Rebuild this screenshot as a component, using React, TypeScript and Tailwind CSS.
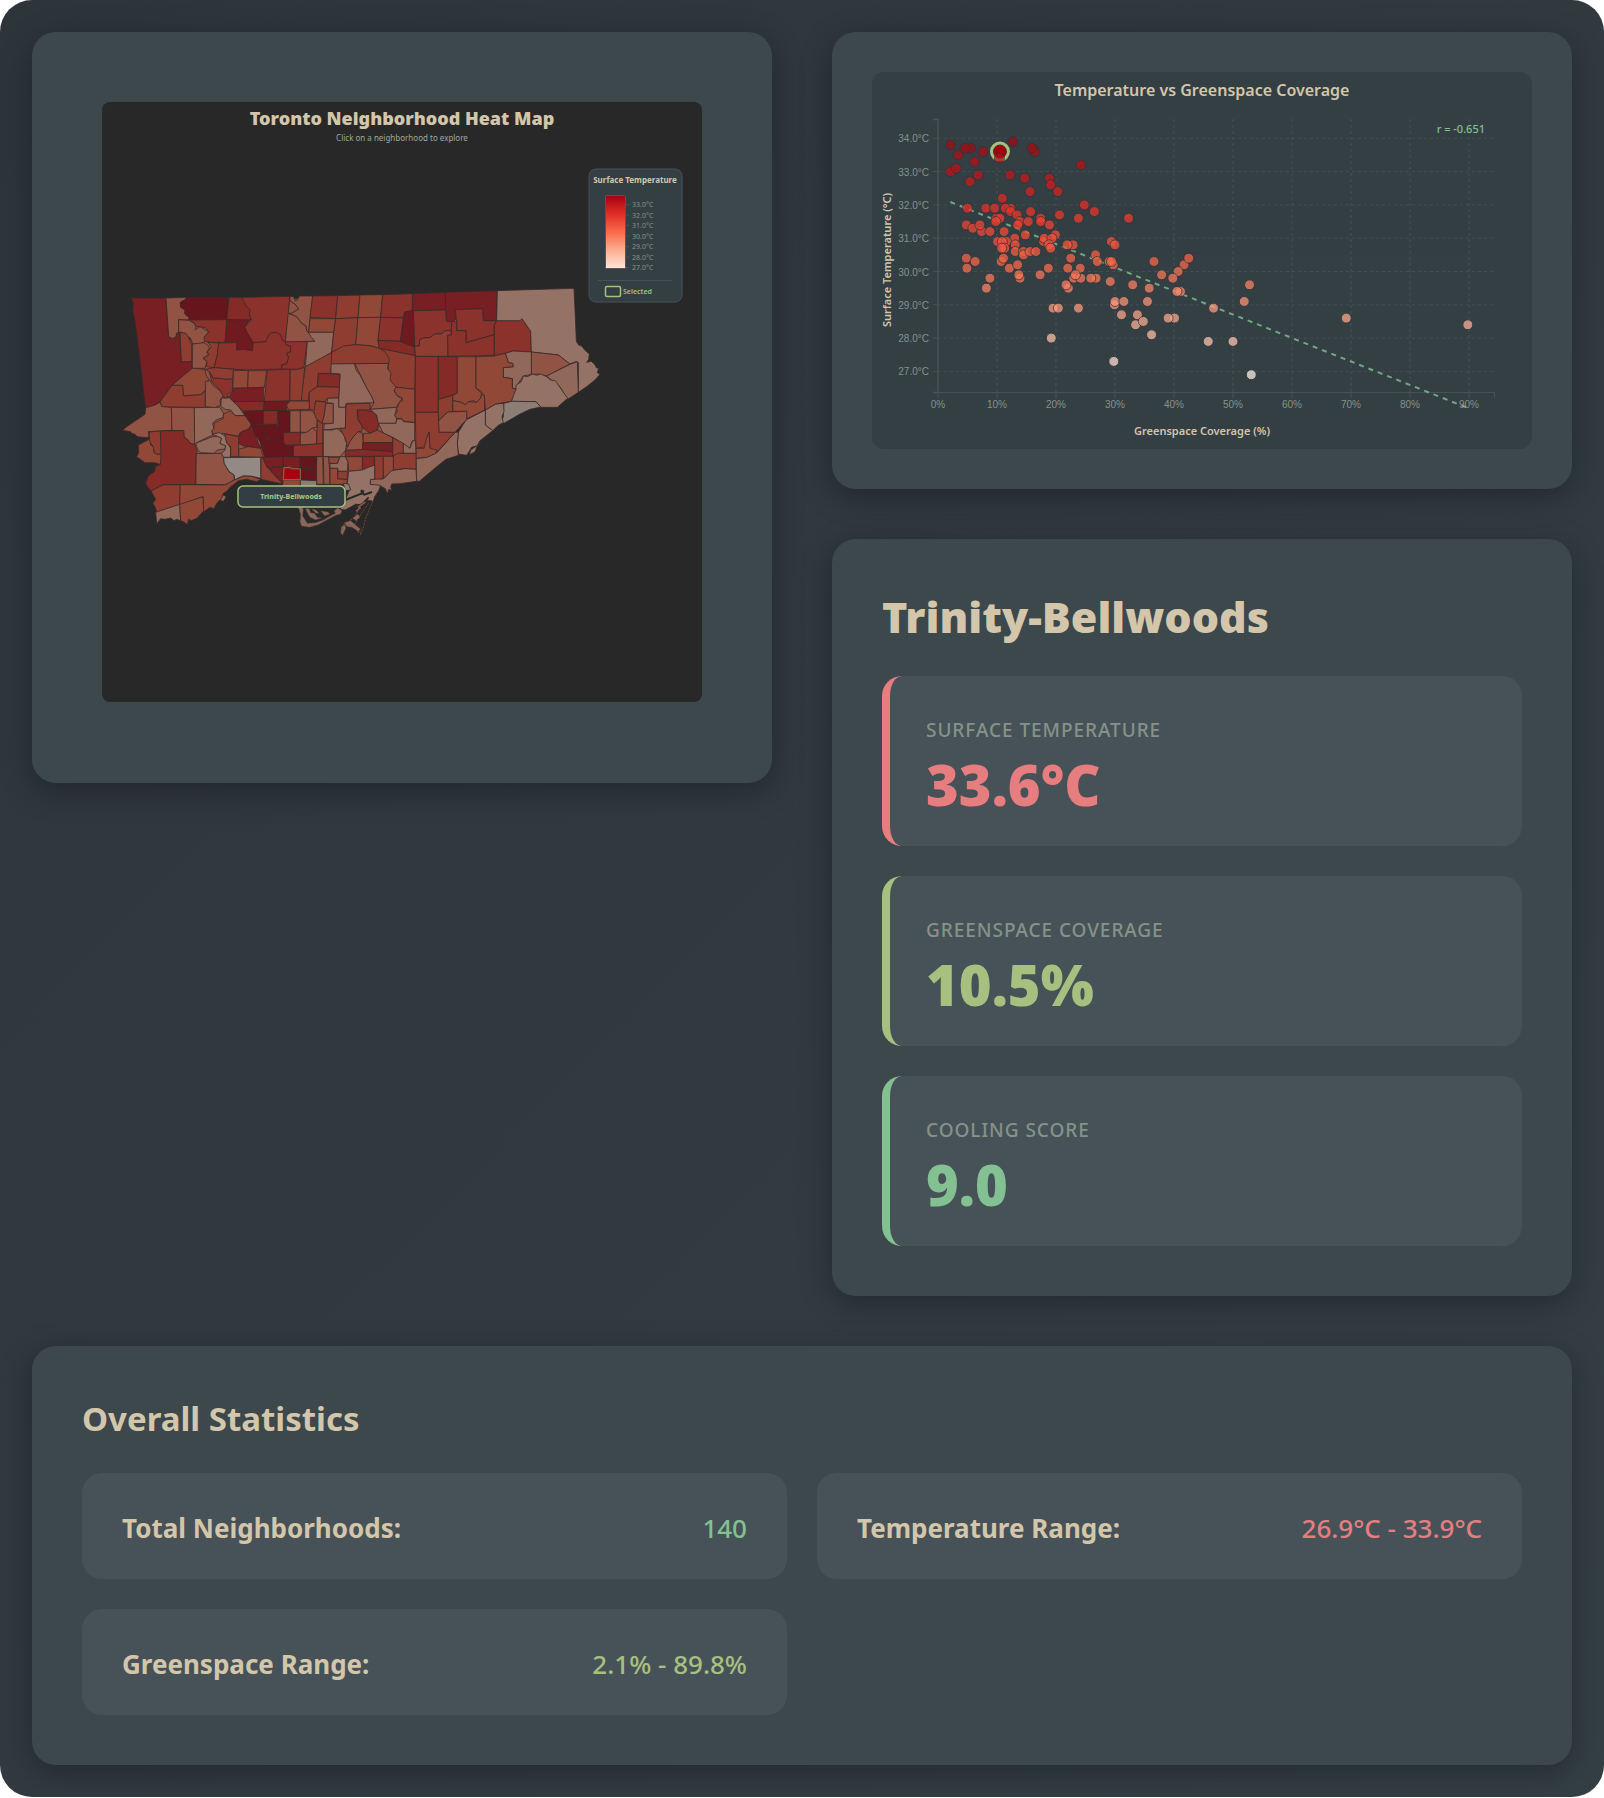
type Region = [fill: string, points: string];

const MAROON = '#65151b';
const WINE = '#6f1a1f';
const CRIMSON = '#771f22';
const BRICK = '#852b27';
const RUST = '#8a322b';
const CLAY = '#8f3d31';
const SIENNA = '#914837';
const BROWN = '#915343';
const TAUPE = '#92685b';
const ROSE = '#947266';
const ASH = '#8c7e75';

/* Traced at three units per map pixel. */
const regions: Region[] = [
  [BROWN, '300,90 600,85 1150,70 1260,160 1340,300 1280,390 1150,400 1060,440 918,630 780,643 700,640 518,642 453,628 345,560 160,640 180,420 240,240 240,160'],
  [CRIMSON, '65,84 168,84 176,200 188,206 199,199 200,190 210,187 214,275 245,275 247,295 220,317 186,346 165,375 150,395 135,405 107,413 101,372 97,330 91,280 84,220 77,170 74,145 68,120 70,105'],
  [BROWN, '168,84 230,82 228,90 218,92 211,97 212,110 225,120 224,130 230,136 238,142 236,150 206,149 206,187 199,190 199,199 188,206 176,200 172,140'],
  [MAROON, '230,82 357,82 354,120 350,149 238,149 236,140 226,134 225,120 212,112 211,99 222,93'],
  [BRICK, '357,82 395,82 405,95 407,105 415,112 420,120 418,135 425,150 350,149'],
  [RUST, '395,82 540,79 534,150 526,215 518,212 510,195 495,187 480,190 472,205 468,215 430,218 415,195 403,172 425,150 418,135 420,120 407,105'],
  [WINE, '350,149 420,150 403,172 415,195 430,218 427,243 400,238 380,240 380,218 345,217'],
  [RUST, '236,150 350,149 345,217 305,217 282,213 280,202 296,187 290,175 270,170 258,170 252,158'],
  [BROWN, '206,149 238,151 252,160 258,168 255,180 270,170 283,178 296,185 282,202 284,215 270,222 248,222 242,205 228,197 215,187 206,187'],
  [CLAY, '210,187 228,190 236,203 245,222 245,275 214,275'],
  [BROWN, '248,222 282,218 293,225 298,235 290,248 296,255 279,265 291,275 285,295 247,295'],
  [CLAY, '293,217 326,219 322,255 312,293 290,290 291,275 280,264 296,255 292,245 304,230'],
  [RUST, '326,219 380,218 380,240 400,238 427,243 430,218 468,215 472,205 480,190 495,187 510,192 518,212 530,215 528,225 542,228 542,245 530,250 536,262 530,282 515,285 515,297 400,300 312,293 322,255'],
  [RUST, '526,215 592,215 582,290 565,298 515,297 515,285 530,282 536,262 530,250 542,245 542,228 528,225'],
  [BROWN, '540,79 538,90 550,100 556,103 566,117 545,130 537,130 560,140 575,160 588,168 590,182 602,195 615,214 526,215'],
  [BROWN, '540,79 551,80 556,93 562,90 568,78 608,78 596,187 590,182 588,168 575,160 560,140 537,130 545,130 566,117 556,103 540,92'],
  [RUST, '608,78 683,77 677,146 600,142'],
  [SIENNA, '600,146 677,146 671,187 596,187'],
  [TAUPE, '596,187 671,187 665,247 620,275 586,290 592,215 615,214 602,200'],
  [CLAY, '683,77 750,75 744,143 677,146'],
  [CLAY, '677,146 744,143 737,224 700,230 665,247 671,187'],
  [SIENNA, '750,75 818,74 812,142 744,143'],
  [SIENNA, '744,143 812,142 804,211 808,235 780,227 737,224'],
  [RUST, '818,74 908,71 906,122 884,126 879,143 812,142'],
  [RUST, '812,142 880,144 871,214 804,211'],
  [BRICK, '804,211 871,214 912,229 916,257 808,235'],
  [WINE, '884,126 910,122 914,229 908,229 871,214'],
  [CRIMSON, '908,71 1006,67 1007,120 908,122'],
  [CRIMSON, '1006,67 1162,62 1160,152 1120,152 1118,116 1036,119 1036,150 1025,154 1009,154 1007,120'],
  [RUST, '910,122 1007,120 1009,154 1025,156 1024,180 1002,184 995,192 975,192 960,203 945,203 930,208 928,228 914,229'],
  [CLAY, '928,228 930,208 945,203 960,203 975,192 995,192 1002,184 1014,181 1024,184 1024,195 1013,196 1014,259 916,259 914,229'],
  [RUST, '1036,119 1118,116 1120,152 1160,152 1153,165 1153,194 1068,218 1068,182 1040,182 1040,153'],
  [RUST, '1013,196 1024,195 1025,154 1040,155 1040,182 1068,182 1068,218 1153,194 1153,256 1014,259'],
  [RUST, '1160,152 1230,152 1236,146 1262,184 1264,246 1210,243 1186,250 1153,256 1153,165'],
  [ROSE, '1162,62 1392,55 1396,140 1399,214 1406,225 1415,228 1424,240 1438,252 1436,268 1430,277 1444,274 1455,284 1459,293 1466,295 1462,308 1470,313 1455,330 1430,350 1405,367 1405,278 1398,275 1378,282 1345,255 1264,246 1262,184 1236,146 1230,152 1160,152'],
  [BROWN, '1264,246 1345,255 1380,282 1310,318 1285,312 1264,313'],
  [TAUPE, '1380,283 1402,275 1405,367 1373,388 1362,370 1350,350 1334,338 1310,318'],
  [TAUPE, '1186,250 1210,243 1264,246 1264,313 1240,318 1225,340 1218,357 1207,355 1207,326 1180,322 1180,293 1210,290 1208,280 1195,278'],
  [ROSE, '1204,394 1210,370 1218,357 1218,346 1234,335 1240,318 1252,320 1268,312 1280,316 1292,312 1310,320 1322,330 1336,332 1350,352 1362,370 1373,385 1342,412 1292,412 1278,395'],
  [ASH, '1181,400 1204,394 1278,395 1292,411 1260,418 1230,432 1182,460 1174,455 1180,440'],
  [ROSE, '1126,420 1157,402 1181,400 1182,425 1176,440 1180,458 1165,466 1148,482 1126,465'],
  [ROSE, '1045,487 1068,450 1126,420 1126,465 1148,482 1110,512 1103,525 1095,545 1078,555 1082,540 1100,528 1085,532 1070,556 1045,552 1042,520'],
  [TAUPE, '918,565 950,562 982,547 1035,487 1045,487 1042,520 1045,556 1008,568 980,590 928,634 920,634'],
  [RUST, '916,259 985,260 985,427 916,427'],
  [BRICK, '985,260 1042,260 1042,370 985,388'],
  [SIENNA, '1042,260 1098,260 1098,355 1115,370 1112,385 1100,397 1090,392 1075,395 1067,404 1050,396 1028,392 1028,375 1042,370'],
  [SIENNA, '1098,260 1153,258 1186,250 1195,278 1208,280 1210,290 1180,293 1180,322 1207,326 1207,355 1218,357 1204,394 1157,402 1126,420 1123,375 1110,362 1098,355'],
  [SIENNA, '1028,392 1050,396 1067,404 1075,395 1100,397 1112,385 1115,372 1123,378 1124,420 1070,447 1070,424 1028,424'],
  [CLAY, '985,388 1028,376 1028,424 1010,428 985,453'],
  [BROWN, '985,453 1014,426 1070,424 1070,448 1035,487 987,487'],
  [CLAY, '916,427 985,427 987,487 1035,487 980,547 960,535 957,487 945,530 918,535'],
  [SIENNA, '918,535 942,535 948,510 957,487 960,535 980,540 978,550 950,562 918,565'],
  [CLAY, '808,235 916,257 914,358 860,352 843,340 838,325 842,315 834,310 835,285 830,260 815,245'],
  [SIENNA, '860,352 914,358 914,458 880,453 875,446 855,445 853,437 862,425 860,415 870,395 878,392 876,384 860,375 852,360'],
  [BROWN, '735,281 836,280 832,295 843,310 840,330 858,352 852,362 862,378 876,386 866,400 860,412 780,418 792,398 785,380 765,345'],
  [CLAY, '665,247 700,228 737,224 780,227 808,235 825,245 838,265 836,280 735,281 662,284'],
  [TAUPE, '662,282 733,281 738,300 750,315 765,345 785,380 792,398 710,400 706,412 686,412 686,380 690,312 662,310'],
  [CLAY, '586,290 665,247 662,310 625,310 622,350 598,366 595,393 572,390'],
  [BRICK, '626,310 690,313 688,352 622,350'],
  [CLAY, '598,366 622,350 688,352 686,384 652,385 646,395 617,393 615,420 598,418'],
  [CLAY, '540,300 565,298 584,292 574,392 540,393'],
  [RUST, '472,300 540,298 538,393 463,395'],
  [SIENNA, '370,300 415,302 413,354 368,354'],
  [SIENNA, '415,302 470,302 463,352 413,354'],
  [CLAY, '285,298 312,293 400,300 370,302 368,327 340,328 330,325 310,325 298,305'],
  [RUST, '298,306 310,325 330,325 345,328 368,327 368,355 366,368 352,372 355,382 340,382 330,360 305,335'],
  [SIENNA, '247,295 285,298 288,315 298,330 290,335 286,362 272,374 220,378 218,346 186,346 220,317'],
  [CLAY, '186,346 218,346 220,378 272,374 286,362 286,412 156,411 150,395 165,375'],
  [BROWN, '286,335 300,332 310,348 330,362 340,378 330,390 332,405 315,413 286,410'],
  [BROWN, '107,413 135,405 150,397 156,410 184,412 186,481 115,485 117,498 112,503 82,500 75,493 65,490 62,485 37,481 50,470 105,433'],
  [BROWN, '184,412 253,413 254,523 238,520 236,512 222,500 220,482 186,481'],
  [TAUPE, '253,413 330,412 340,430 340,442 318,450 308,460 312,475 306,482 308,495 265,515 254,523'],
  [TAUPE, '335,383 345,385 365,382 405,437 375,437 362,420 345,418 332,408'],
  [SIENNA, '340,432 362,422 375,437 405,437 424,463 415,478 390,488 385,499 340,490 308,495 306,482 312,475 312,460 340,445'],
  [CRIMSON, '355,380 368,368 368,356 460,352 460,395 370,395'],
  [BRICK, '370,395 463,394 460,423 400,423'],
  [MAROON, '398,424 460,422 460,463 424,463'],
  [WINE, '463,394 540,393 530,405 530,422 463,422'],
  [BRICK, '460,422 504,422 501,463 460,463'],
  [MAROON, '504,422 540,422 540,487 522,487 504,477'],
  [MAROON, '460,465 501,463 504,477 522,487 520,510 488,510 470,505 463,485'],
  [MAROON, '424,463 460,465 463,485 475,523 450,515 433,490'],
  [CRIMSON, '385,499 395,485 420,475 424,463 433,490 445,520 454,535 415,530 400,528 385,520'],
  [SIENNA, '386,538 415,530 452,535 460,562 386,560'],
  [MAROON, '450,515 475,523 468,508 488,510 520,510 525,525 550,527 550,560 464,562'],
  [BRICK, '520,488 571,487 571,525 525,525 520,510'],
  [BROWN, '540,422 571,422 571,487 540,487'],
  [BROWN, '571,422 607,422 622,445 620,472 608,474 590,487 571,487'],
  [BROWN, '571,490 590,487 608,474 620,485 620,523 571,525'],
  [SIENNA, '530,405 540,393 598,393 598,418 535,420'],
  [CLAY, '617,393 648,397 642,440 635,460 618,445 612,425'],
  [BROWN, '648,400 670,400 670,460 636,460 642,440'],
  [TAUPE, '652,385 686,384 686,412 708,412 706,475 690,475 642,480 642,462 670,460 670,400 652,398'],
  [CLAY, '622,450 638,462 638,523 620,523'],
  [RUST, '550,527 638,520 638,560 550,560'],
  [TAUPE, '640,480 668,480 680,476 697,488 705,500 706,512 711,520 706,542 690,560 640,560'],
  [CLAY, '708,402 780,400 780,420 742,420 742,445 757,470 755,485 745,485 730,500 720,520 708,530 711,520 703,500 690,475 706,475'],
  [BROWN, '732,498 745,485 757,490 760,518 757,540 708,540 720,515'],
  [BRICK, '742,420 760,421 795,425 808,460 802,480 780,490 760,475 745,450'],
  [TAUPE, '780,418 860,412 854,437 860,446 858,460 805,460 800,435'],
  [TAUPE, '805,460 858,460 860,447 875,447 880,455 914,458 914,512 905,515 900,535 850,503 820,490'],
  [SIENNA, '760,490 780,490 802,480 848,503 848,518 760,518'],
  [CRIMSON, '758,518 848,518 848,545 758,540'],
  [BRICK, '706,543 757,538 848,545 848,559 706,559'],
  [CLAY, '848,503 880,520 880,550 865,550 862,557 848,557'],
  [TAUPE, '880,520 900,535 908,512 916,512 918,550 880,550'],
  [CLAY, '850,557 865,550 918,550 918,598 885,596 850,600'],
  [BRICK, '758,560 793,560 792,590 758,600'],
  [CLAY, '794,559 820,559 820,627 794,630'],
  [SIENNA, '820,559 850,559 850,600 835,612 820,625'],
  [TAUPE, '780,643 782,628 820,627 845,602 885,596 918,598 920,634 870,641 845,642 842,652 846,662 836,658 832,672 826,656 812,648'],
  [BROWN, '640,560 657,560 660,643 642,643'],
  [BROWN, '620,560 638,560 640,643 620,643'],
  [SIENNA, '657,562 690,562 685,570 683,580 657,580'],
  [TAUPE, '690,560 706,560 714,575 712,604 683,604 683,595 660,595 660,581 683,580'],
  [SIENNA, '660,595 683,595 683,626 712,628 710,643 660,643'],
  [CLAY, '683,604 712,604 712,628 683,626'],
  [SIENNA, '706,560 757,560 757,600 716,604 714,575'],
  [ROSE, '716,604 757,600 780,590 794,586 794,628 782,628 780,643 812,646 806,662 794,680 790,694 770,690 752,706 738,702 706,720 690,718 706,690 718,660 712,640'],
  [ASH, '700,640 716,642 722,660 706,662'],
  ['#938a86', '340,563 452,562 453,625 425,619 400,618 373,630 372,615 357,605 342,580'],
  [BROWN, '258,551 340,550 342,580 357,605 372,615 373,630 345,645 257,643'],
  [BRICK, '152,483 222,482 222,500 236,512 240,520 254,523 262,545 258,551 257,643 158,645 123,663 112,650 107,640 115,618 133,605 137,590 151,583'],
  [CLAY, '118,486 151,483 153,553 140,553 132,548 130,530 118,515'],
  [SIENNA, '85,525 118,508 122,525 130,530 132,548 140,553 153,553 151,583 133,578 105,578 80,560 86,548'],
  [CLAY, '123,663 158,645 211,644 209,705 140,727 136,712 128,700 137,688'],
  [SIENNA, '211,644 345,645 373,630 400,618 425,619 453,628 440,635 410,628 386,632 362,650 350,664 340,670 334,686 320,700 312,716 300,712 281,726 279,680 209,705'],
  [TAUPE, '137,727 209,703 212,752 200,748 192,752 182,744 165,748 152,746 140,762'],
  [SIENNA, '209,703 279,680 281,722 262,744 244,752 236,748 232,764 222,756 212,752'],
  [TAUPE, '257,520 308,500 325,500 335,505 330,520 347,527 345,537 322,540 312,550 270,548 262,535'],
  [ROSE, '306,492 330,488 348,500 350,515 362,535 362,562 340,562 335,550 345,540 347,527 330,520 335,505 325,500'],
  [CLAY, '344,492 386,500 386,560 362,560 362,530 350,520'],
  [CLAY, '453,563 464,562 472,590 495,615 518,642 453,628'],
  [CRIMSON, '457,562 520,560 520,592 490,590 485,600 470,590'],
  [CRIMSON, '470,588 485,600 490,590 520,592 518,640 495,618'],
  [CRIMSON, '520,560 571,560 571,595 540,592 520,590'],
  [MAROON, '571,560 620,560 618,597 571,595'],
  [MAROON, '571,597 619,597 618,632 571,630'],
  [SIENNA, '520,630 571,630 571,660 518,660 518,642'],
  [ASH, '571,630 620,632 620,660 571,660'],
];

const islands = [
  '563,705 574,705 580,718 578,738 586,750 592,760 616,758 640,750 660,738 676,730 672,722 684,714 696,722 692,732 678,736 655,748 625,764 598,772 574,768 570,755 572,735',
  '586,716 598,716 602,728 614,730 622,742 636,744 616,750 600,742 594,732',
  '604,716 618,720 628,730 618,730',
  '632,722 654,726 660,732 644,738',
  '694,770 704,764 708,774 698,796 692,788',
  '702,758 722,752 736,764 752,778 744,784 726,772 712,770',
  '728,744 744,732 750,742 738,752',
  '340,676 348,680 340,694 332,690',
];

function HeatMap() {
  return (
    <svg viewBox="0 0 600 600" role="img" aria-label="Toronto Neighborhood Heat Map" className="block h-auto w-full rounded-lg bg-[#282828] font-['Noto_Sans',sans-serif]">
      <defs>
        <linearGradient id="heat" x1="0" y1="1" x2="0" y2="0">
          <stop offset="0" stopColor="#fee5d9" />
          <stop offset="0.25" stopColor="#fcae91" />
          <stop offset="0.5" stopColor="#fb6a4a" />
          <stop offset="0.75" stopColor="#de2d26" />
          <stop offset="1" stopColor="#a50010" />
        </linearGradient>
      </defs>
      <text x="300" y="23" textAnchor="middle" fill="#d3c6aa" className="text-[18px] font-black">Toronto Neighborhood Heat Map</text>
      <text x="300" y="39" textAnchor="middle" fill="#9da9a0" className="text-[8px]">Click on a neighborhood to explore</text>

      <g transform="translate(8 168) scale(0.33333)" strokeLinejoin="round">
        <g stroke="#38292a" strokeWidth="2.4">
          {regions.map(([fill, points], i) => (
            <polygon key={i} points={points} fill={fill} />
          ))}
        </g>
        <g fill="#8a675c" stroke="#4a3632" strokeWidth="1.5">
          {islands.map((points) => (
            <polygon key={points} points={points} />
          ))}
        </g>
        <g fill="none" stroke="#282828">
          <path d="M706 690l50-20 8 4 22-8" strokeWidth="6" />
          <path d="M706 722l30-14 20-6 20-20" strokeWidth="5" />
          <path d="M752 662l10 4" strokeWidth="8" />
        </g>
        <g fill="none" stroke="#8f5244">
          <path d="M788 694l-14 34-8 20-4 18-12 32M776 700l-22 30-22 36 16 24M748 714l-16 30-30 18-6 28M706 766l24 6 24 18" strokeWidth="2" strokeDasharray="7 3" />
          <path d="M744 712l22-16M738 724l14-12" strokeWidth="5" />
        </g>
        <polygon points="522,593 541,592 545,596 571,597 571,629 520,629" fill="#a80010" stroke="#7c6a45" strokeWidth="3.5" />
      </g>

      <g>
        <rect x="136" y="384" width="107" height="21" rx="5" fill="#333e44" stroke="#a7c080" strokeWidth="1.5" />
        <text x="189" y="397" textAnchor="middle" fill="#a7c080" className="text-[7px] font-extrabold">Trinity-Bellwoods</text>
      </g>

      <g>
        <rect x="487" y="67" width="93" height="133" rx="7" fill="#343f44" stroke="#475258" />
        <text x="533" y="81" textAnchor="middle" fill="#d3c6aa" className="text-[8px] font-bold">Surface Temperature</text>
        <rect x="503.500" y="93.500" width="20" height="73" rx="1" fill="url(#heat)" stroke="#5a5256" />
        {[33, 32, 31, 30, 29, 28, 27].map((t, i) => (
          <g key={t}>
            <line x1="524" x2="527" y1={102.5 + i * 10.5} y2={102.5 + i * 10.5} stroke="#475258" />
            <text x="530" y={105 + i * 10.5} fill="#859289" className="text-[7px]">{t}.0°C</text>
          </g>
        ))}
        <line x1="496" x2="570" y1="178.500" y2="178.500" stroke="#475258" />
        <rect x="503.500" y="184.500" width="15" height="10" rx="1.5" fill="none" stroke="#a7c080" strokeWidth="1.5" />
        <text x="521" y="192" fill="#a7c080" className="text-[7px] font-semibold">Selected</text>
      </g>
    </svg>
  );
}

/* [greenspace coverage %, surface temperature °C] */
const readings: [number, number][] = [
  [2.1, 33], [2.1, 33.8], [3.1, 33.1], [3.4, 33.5], [5.5, 33.7], [4.6, 33.7], [5.4, 32.7], [6.2, 33.3], [6.8, 32.9], [7.6, 33.6],
  [12.7, 33.9], [16.4, 33.6], [15.9, 33.7], [24.2, 33.2], [12.2, 32.9], [14.7, 32.8], [18.9, 32.8], [19.1, 32.6], [20.3, 32.4],
  [15.6, 32.4], [10.9, 32.2], [24.8, 32], [26.5, 31.8], [32.3, 31.6], [23.8, 31.6], [20.6, 31.7], [5, 31.9], [8.1, 31.9],
  [9.6, 31.9], [12.3, 31.9], [11.4, 31.9], [12.3, 31.8], [13.4, 31.7], [15.7, 31.8], [9.9, 31.6], [10.5, 31.6], [9.8, 31.5],
  [13.9, 31.5], [13.5, 31.4], [15.3, 31.5], [17.4, 31.6], [17.4, 31.5], [18.9, 31.4], [4.8, 31.4], [5.9, 31.3], [7.4, 31.2],
  [7.1, 31.4], [8.8, 31.2], [11.2, 31.2], [14.8, 31.1], [13, 31], [19.9, 31.1], [17.9, 30.9], [18, 31], [19.3, 31], [10.1, 30.9],
  [11.6, 30.9], [10.9, 30.9], [13.1, 30.8], [18.8, 30.8], [19.1, 30.7], [11.3, 30.7], [10.8, 30.7], [13.1, 30.6], [14.5, 30.6],
  [14.5, 30.5], [15.6, 30.6], [16.6, 30.6], [22.9, 30.8], [21.9, 30.8], [29.4, 30.9], [30, 30.8], [26.7, 30.5], [22.5, 30.4],
  [27, 30.3], [29.7, 30.2], [29, 30.3], [29.4, 30.3], [4.8, 30.4], [6.3, 30.3], [4.9, 30.1], [8.8, 29.8], [8.2, 29.5],
  [10.7, 30.3], [11.1, 30.4], [12.1, 30.1], [13.5, 30.2], [13.9, 29.8], [13.7, 29.9], [17.3, 29.9], [18.7, 30.1], [22, 30.1],
  [23, 29.8], [24.2, 29.8], [24.1, 30.1], [23.3, 29.9], [26.8, 29.8], [25.9, 29.8], [22.1, 29.5], [21.7, 29.6], [29.2, 29.7],
  [33, 29.6], [35.8, 29.5], [36.6, 30.3], [41.7, 30.2], [42.5, 30.4], [40.7, 30], [37.9, 29.9], [39.8, 29.8], [41.1, 29.4],
  [40.5, 29.4], [19.5, 28.9], [20.4, 28.9], [23.8, 28.9], [29.9, 29], [30, 29.1], [31.5, 29.1], [35.5, 29.1], [31.1, 28.7],
  [33.8, 28.7], [33.5, 28.4], [34.8, 28.5], [40.1, 28.6], [39, 28.6], [36.2, 28.1], [19.2, 28], [29.8, 27.3], [52.8, 29.6],
  [51.9, 29.1], [46.7, 28.9], [45.8, 27.9], [50, 27.9], [53.1, 26.9], [69.2, 28.6], [89.8, 28.4],
];

const ramp: [number, number[]][] = [
  [26.9, [255, 240, 232]],
  [28.2, [252, 187, 161]],
  [29.2, [252, 146, 114]],
  [30.2, [251, 106, 74]],
  [31.3, [244, 72, 52]],
  [32, [232, 46, 38]],
  [33, [190, 18, 24]],
  [33.9, [158, 10, 18]],
];

function heatColor(t: number) {
  const i = Math.max(1, ramp.findIndex(([stop]) => t <= stop));
  const [t0, a] = ramp[i - 1];
  const [t1, b] = ramp[i];
  const k = (t - t0) / (t1 - t0);
  return `rgb(${a.map((v, c) => Math.round(v + (b[c] - v) * k)).join(',')})`;
}

const px = (green: number) => 66 + green * 5.9;
const py = (temp: number) => 66.3 + (34 - temp) * 33.3;

function Dot({ green, temp }: { green: number; temp: number }) {
  return <circle cx={px(green)} cy={py(temp)} r="5" fill={heatColor(temp)} stroke="#2d353b" opacity="0.73" />;
}

function ScatterPlot() {
  return (
    <svg viewBox="0 0 660 377" role="img" aria-label="Temperature vs Greenspace Coverage" className="block h-auto w-full rounded-xl bg-[#343f44] font-['Noto_Sans',sans-serif]">
      <text x="330" y="24" textAnchor="middle" fill="#d3c6aa" className="text-[16px] font-semibold">Temperature vs Greenspace Coverage</text>
      <g stroke="#475258" strokeDasharray="3 3">
        {[10, 20, 30, 40, 50, 60, 70, 80, 90].map((g) => (
          <line key={g} x1={px(g)} x2={px(g)} y1="47" y2="320" strokeWidth="1.6" opacity="0.6" />
        ))}
        {[34, 33, 32, 31, 30, 29, 28, 27].map((t) => (
          <line key={t} x1="66" x2="623" y1={py(t)} y2={py(t)} opacity="0.85" />
        ))}
      </g>
      <g fill="none" stroke="#475258">
        <path d="M61 47.500h5V320.500h-5" strokeWidth="1.5" />
        <path d="M66 320.500H622.500v5" />
        {[0, 10, 20, 30, 40, 50, 60, 70, 80, 90].map((g) => (
          <line key={g} x1={px(g)} x2={px(g)} y1="320" y2="326" />
        ))}
        {[34, 33, 32, 31, 30, 29, 28, 27].map((t) => (
          <line key={t} x1="61" x2="66" y1={py(t)} y2={py(t)} />
        ))}
      </g>
      <g fill="#859289" className="font-['Liberation_Sans',sans-serif] text-[10px]">
        {[0, 10, 20, 30, 40, 50, 60, 70, 80, 90].map((g) => (
          <text key={g} x={px(g)} y="336" textAnchor="middle">{g}%</text>
        ))}
        {[34, 33, 32, 31, 30, 29, 28, 27].map((t) => (
          <text key={t} x="57" y={py(t) + 4} textAnchor="end">{t}.0°C</text>
        ))}
      </g>
      <line x1={px(2.1)} y1="130" x2={px(89.8)} y2="336" stroke="#83c092" strokeWidth="2" strokeDasharray="5 5" opacity="0.8" />
      {readings.map(([g, t], i) => (
        <Dot key={i} green={g} temp={t} />
      ))}
      <circle cx={px(10.5)} cy={py(33.6)} r="8.500" fill="#343f44" stroke="#a7c080" strokeWidth="3" />
      <circle cx={px(10.5)} cy={py(33.6)} r="6.500" fill="#a50010" />
      <Dot green={10.4} temp={33.4} />
      <text x="613" y="61" textAnchor="end" fill="#83c092" className="text-[11px] font-medium">r = -0.651</text>
      <text x="330" y="363" textAnchor="middle" fill="#d3c6aa" className="text-[11px] font-semibold">Greenspace Coverage (%)</text>
      <text transform="translate(19 188) rotate(-90)" textAnchor="middle" fill="#d3c6aa" className="text-[11px] font-semibold">Surface Temperature (°C)</text>
    </svg>
  );
}

const metrics = [
  { label: 'Surface Temperature', value: '33.6°C', tone: 'border-[#e67e80] text-[#e67e80]' },
  { label: 'Greenspace Coverage', value: '10.5%', tone: 'border-[#a7c080] text-[#a7c080]' },
  { label: 'Cooling Score', value: '9.0', tone: 'border-[#83c092] text-[#83c092]' },
];

const totals = [
  { label: 'Total Neighborhoods:', value: '140', tone: 'text-[#83c092]' },
  { label: 'Temperature Range:', value: '26.9°C - 33.9°C', tone: 'text-[#e67e80]' },
  { label: 'Greenspace Range:', value: '2.1% - 89.8%', tone: 'text-[#a7c080]' },
];

export default function App() {
  return (
    <main className="grid grid-cols-2 items-start gap-x-15 gap-y-[50px] rounded-[32px] bg-linear-135 from-[#2d353b] to-[#343f44] p-8 font-['Noto_Sans',sans-serif] text-[#d3c6aa]">
      <section className="rounded-3xl bg-[#3d484d] px-[70px] pt-[70px] pb-[81px] shadow-[0_8px_32px_rgba(0,0,0,0.3)]">
        <HeatMap />
      </section>

      <div className="flex flex-col gap-[50px]">
        <section className="rounded-3xl bg-[#3d484d] p-10 shadow-[0_8px_32px_rgba(0,0,0,0.3)]">
          <ScatterPlot />
        </section>

        <section className="rounded-3xl bg-[#3d484d] p-[50px] shadow-[0_8px_32px_rgba(0,0,0,0.3)]">
          <h1 className="mb-[31px] text-[43px] leading-14 font-black">Trinity-Bellwoods</h1>
          <dl className="flex flex-col gap-[30px]">
            {metrics.map((m) => (
              <div key={m.label} className={`flex h-[170px] flex-col justify-end rounded-[20px] border-l-8 bg-[#475258] px-9 pb-[30px] ${m.tone}`}>
                <dt className="text-[19px] leading-7 font-medium tracking-wider text-[#859289] uppercase">{m.label}</dt>
                <dd className="mt-2 text-[56px] leading-16 font-black">{m.value}</dd>
              </div>
            ))}
          </dl>
        </section>
      </div>

      <section className="col-span-2 rounded-3xl bg-[#3d484d] p-[50px] shadow-[0_8px_32px_rgba(0,0,0,0.3)]">
        <h2 className="mb-8 text-[33px] leading-[45px] font-bold">Overall Statistics</h2>
        <dl className="grid grid-cols-2 gap-[30px]">
          {totals.map((s) => (
            <div key={s.label} className="flex h-[106px] items-center justify-between rounded-[20px] bg-[#475258] px-10 pt-1 text-[26px]">
              <dt className="font-bold">{s.label}</dt>
              <dd className={`font-medium ${s.tone}`}>{s.value}</dd>
            </div>
          ))}
        </dl>
      </section>
    </main>
  );
}
